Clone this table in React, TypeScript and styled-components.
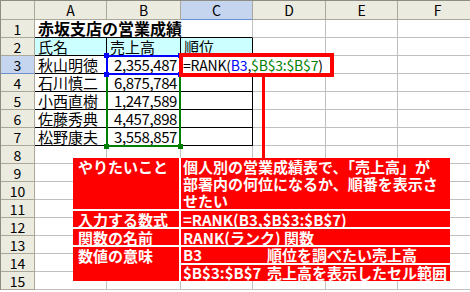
import { Fragment } from 'react';
import styled, { createGlobalStyle } from 'styled-components';

const GlobalStyle = createGlobalStyle`
  html, body {
    margin: 0;
    padding: 0;
    background: #fff;
  }
  body {
    width: 470px;
    height: 292px;
    overflow: hidden;
    font-family: "Noto Sans CJK JP", "Noto Sans", sans-serif;
    color: #000;
  }
`;

const Screen = styled.div`
  position: relative;
  width: 470px;
  height: 292px;
  overflow: hidden;
`;

const Sheet = styled.div`
  display: grid;
  grid-template-columns: 34px 72px 74px 72px 73px 72px 80px;
  grid-template-rows: 19px;
  grid-auto-rows: 18px;
  border-top: 1px solid #8e8d84;
  border-left: 1px solid #8e8d84;
`;

const HeadCell = styled.div<{ $active?: boolean }>`
  display: flex;
  align-items: center;
  justify-content: center;
  background: ${(p) => (p.$active ? '#c5d5ef' : '#ecebdf')};
  border-right: 1px solid #aca899;
  border-bottom: 1px solid ${(p) => (p.$active ? '#6b8fd0' : '#aca899')};
  font-size: 14px;
  line-height: 1;
`;

const Cell = styled.div<{
  $fill?: string;
  $right?: boolean;
  $bottom?: boolean;
  $num?: boolean;
  $span?: number;
  $title?: boolean;
}>`
  grid-column: span ${(p) => p.$span ?? 1};
  background: ${(p) => p.$fill ?? '#fff'};
  border-right: 1px solid ${(p) => (p.$right ? '#000' : '#c0c0c0')};
  border-bottom: 1px solid ${(p) => (p.$bottom ? '#000' : '#c0c0c0')};
  padding: 0 3px;
  font-size: ${(p) => (p.$title ? '16px' : '15px')};
  font-weight: ${(p) => (p.$title ? 700 : 400)};
  letter-spacing: ${(p) => (p.$num ? '-0.4px' : '0')};
  line-height: 17px;
  text-align: ${(p) => (p.$num ? 'right' : 'left')};
  white-space: nowrap;
`;

const RangeFrame = styled.div<{ $color: string; $top: number; $height: number }>`
  position: absolute;
  left: 106px;
  top: ${(p) => p.$top}px;
  width: 75px;
  height: ${(p) => p.$height}px;
  box-sizing: border-box;
  border: 2px solid ${(p) => p.$color};
`;

const Handle = styled.span<{ $color: string; $v: 'top' | 'bottom'; $h: 'left' | 'right' }>`
  position: absolute;
  width: 5px;
  height: 5px;
  background: ${(p) => p.$color};
  ${(p) => p.$v}: -4px;
  ${(p) => p.$h}: -4px;
`;

const Editor = styled.div`
  position: absolute;
  left: 179px;
  top: 53px;
  width: 155px;
  height: 24px;
  box-sizing: border-box;
  border: 4px solid #f00;
  background: #fff;
  font-size: 14px;
  line-height: 16px;
  letter-spacing: -0.2px;
  white-space: nowrap;
  overflow: hidden;
`;

const Ref = styled.span<{ $color: string }>`
  color: ${(p) => p.$color};
`;

const Connector = styled.div`
  position: absolute;
  left: 262px;
  top: 77px;
  width: 3px;
  height: 81px;
  background: #f00;
`;

const Callout = styled.div`
  position: absolute;
  left: 73px;
  top: 158px;
  width: 377px;
  display: grid;
  grid-template-columns: 106px 1fr;
  grid-template-rows: 51px 16px 16px 34px;
  gap: 2px;
  background: #fff;
  color: #fff;
  font-size: 15px;
  font-weight: 700;
`;

const Label = styled.div`
  background: #f00;
  padding-left: 5px;
  line-height: 17px;
  white-space: nowrap;
`;

const Body = styled.div`
  background: #f00;
  padding-left: 2px;
  line-height: 17px;
  white-space: nowrap;
`;

const Pair = styled.div`
  display: grid;
  grid-template-rows: 16px 16px;
  gap: 2px;
  background: #fff;
`;

const PairRow = styled.div`
  display: grid;
  grid-template-columns: 84px 1fr;
  background: #f00;
  padding-left: 2px;
  line-height: 16px;
  white-space: nowrap;
`;

const columns = ['A', 'B', 'C', 'D', 'E', 'F'];

const staff = [
  { name: '秋山明徳', sales: '2,355,487' },
  { name: '石川慎二', sales: '6,875,784' },
  { name: '小西直樹', sales: '1,247,589' },
  { name: '佐藤秀典', sales: '4,457,898' },
  { name: '松野康夫', sales: '3,558,857' },
];

const Blank = ({ n }: { n: number }) => (
  <>
    {Array.from({ length: n }, (_, i) => (
      <Cell key={i} />
    ))}
  </>
);

const App = () => {
  return (
    <>
      <GlobalStyle />
      <Screen>
        <Sheet>
          <HeadCell />
          {columns.map((c) => (
            <HeadCell key={c} $active={c === 'C'}>
              {c}
            </HeadCell>
          ))}

          <HeadCell>1</HeadCell>
          <Cell $span={3} $title $bottom>
            赤坂支店の営業成績
          </Cell>
          <Blank n={3} />

          <HeadCell>2</HeadCell>
          <Cell $fill="#ccffff" $right $bottom>氏名</Cell>
          <Cell $fill="#ccffff" $right $bottom>売上高</Cell>
          <Cell $fill="#ccffff" $right $bottom>順位</Cell>
          <Blank n={3} />

          {staff.map((s, i) => (
            <Fragment key={s.name}>
              <HeadCell $active={i === 0}>{i + 3}</HeadCell>
              <Cell $right $bottom>{s.name}</Cell>
              <Cell $right $bottom $num>{s.sales}</Cell>
              <Cell $right $bottom />
              <Blank n={3} />
            </Fragment>
          ))}

          {Array.from({ length: 8 }, (_, i) => (
            <Fragment key={i}>
              <HeadCell>{i + 8}</HeadCell>
              <Blank n={6} />
            </Fragment>
          ))}
        </Sheet>

        <RangeFrame $color="#008000" $top={55} $height={92}>
          <Handle $color="#008000" $v="bottom" $h="left" />
          <Handle $color="#008000" $v="bottom" $h="right" />
        </RangeFrame>
        <RangeFrame $color="#0000ff" $top={55} $height={20}>
          <Handle $color="#0000ff" $v="top" $h="left" />
          <Handle $color="#0000ff" $v="top" $h="right" />
          <Handle $color="#0000ff" $v="bottom" $h="left" />
          <Handle $color="#0000ff" $v="bottom" $h="right" />
        </RangeFrame>

        <Editor>
          =RANK(<Ref $color="#0000ff">B3</Ref>,<Ref $color="#008000">$B$3:$B$7</Ref>)
        </Editor>
        <Connector />

        <Callout>
          <Label>やりたいこと</Label>
          <Body>
            個人別の営業成績表で、「売上高」が
            <br />
            部署内の何位になるか、順番を表示さ
            <br />
            せたい
          </Body>
          <Label>入力する数式</Label>
          <Body>=RANK(B3,$B$3:$B$7)</Body>
          <Label>関数の名前</Label>
          <Body>RANK(ランク) 関数</Body>
          <Label>数値の意味</Label>
          <Pair>
            <PairRow>
              <span>B3</span>
              <span>順位を調べたい売上高</span>
            </PairRow>
            <PairRow>
              <span>$B$3:$B$7</span>
              <span>売上高を表示したセル範囲</span>
            </PairRow>
          </Pair>
        </Callout>
      </Screen>
    </>
  );
};

export default App;
